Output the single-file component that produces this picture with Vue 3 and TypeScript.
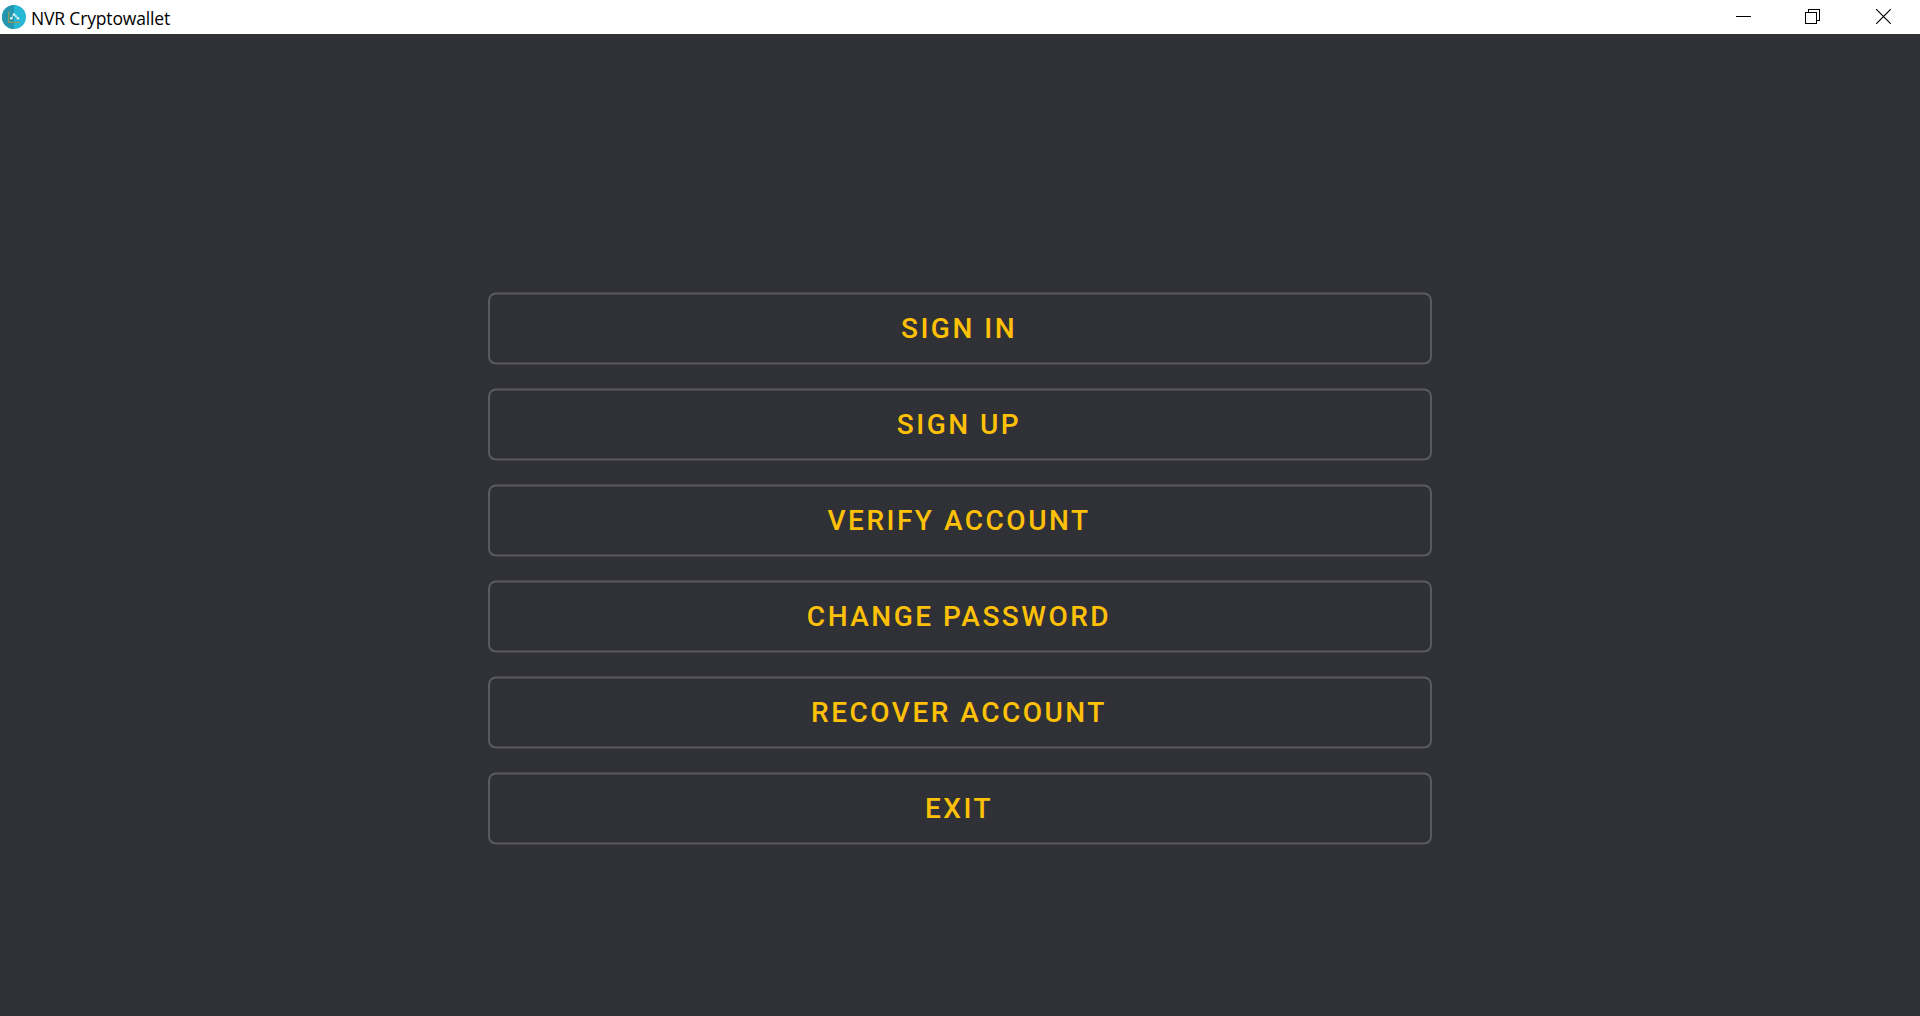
<script setup lang="ts">
const actions: string[] = [
  'SIGN IN',
  'SIGN UP',
  'VERIFY ACCOUNT',
  'CHANGE PASSWORD',
  'RECOVER ACCOUNT',
  'EXIT',
]
</script>

<template>
  <div class="window">
    <header class="titlebar">
      <svg class="logo" width="24" height="24" viewBox="0 0 24 24">
        <circle cx="12" cy="12" r="12" fill="#25b7d3" />
        <path d="M12 0A12 12 0 0 0 12 24Z" fill="#2496ae" />
        <path d="M6.8 6.5V17.3H18" fill="none" stroke="#8f9a62" stroke-width="1.3" />
        <path d="M9.3 13.2L11.8 9.6L14 11.2L15.8 13" fill="none" stroke="#a9dce8" stroke-width="1" />
        <g fill="#e4f3f6">
          <circle cx="9.3" cy="13.3" r="1.3" />
          <circle cx="12" cy="9.5" r="1.3" />
          <circle cx="14" cy="11.2" r="1" />
          <circle cx="15.9" cy="13.2" r="1.3" />
        </g>
      </svg>
      <span class="title">NVR Cryptowallet</span>
      <nav class="controls">
        <svg width="15" height="15" viewBox="0 0 15 15" shape-rendering="crispEdges">
          <path d="M0 7.5H15" stroke="#000" />
        </svg>
        <svg width="15" height="15" viewBox="0 0 15 15" fill="none" stroke="#000" shape-rendering="crispEdges">
          <path d="M.5 3.5H11.5V14.5H.5ZM3.5 3.5V.5H14.5V11.5H11.5" />
        </svg>
        <svg width="15" height="15" viewBox="0 0 15 15" stroke="#000" stroke-width="1.2">
          <path d="M.2 .2L14.8 14.8M14.8 .2L.2 14.8" />
        </svg>
      </nav>
    </header>
    <main class="menu">
      <button v-for="label in actions" :key="label" class="action" type="button">
        <svg class="outline" width="944" height="73" viewBox="0 0 944 73">
          <rect x="1" y="1.5" width="942" height="70" rx="7" fill="none" stroke="#5a5b5f" stroke-width="2" />
        </svg>
        <span class="label">{{ label }}</span>
      </button>
    </main>
  </div>
</template>

<style>
body {
  margin: 0;
  background: #303136;
}
</style>

<style scoped>
.window {
  height: 1016px;
  display: flex;
  flex-direction: column;
  overflow: hidden;
  background: #303136;
}
.titlebar {
  flex: none;
  height: 34px;
  box-sizing: border-box;
  padding: 0 29px 0 2px;
  display: flex;
  align-items: center;
  background: #fff;
}
.logo {
  display: block;
}
.title {
  margin-left: 5px;
  padding-top: 1px;
  color: #000;
  font: 17.5px/24px "Open Sans", "Noto Sans", sans-serif;
  letter-spacing: -0.16px;
  white-space: nowrap;
}
.controls {
  margin-left: auto;
  display: flex;
}
.controls svg {
  display: block;
  margin-bottom: 1px;
}
.controls svg:nth-child(2) {
  margin-left: 54px;
}
.controls svg:nth-child(3) {
  margin-left: 56px;
}
.menu {
  flex: 1;
  padding-top: 258px;
  display: flex;
  flex-direction: column;
  align-items: center;
  gap: 23px;
}
.action {
  position: relative;
  width: 944px;
  height: 73px;
  padding: 0 2px 0 0;
  border: 0;
  box-sizing: border-box;
  background: transparent;
  display: flex;
  align-items: center;
  justify-content: center;
  color: #ffc107;
  font: 500 28px/36px Roboto, sans-serif;
  letter-spacing: 2.5px;
}
.outline {
  position: absolute;
  inset: 0;
}
</style>
